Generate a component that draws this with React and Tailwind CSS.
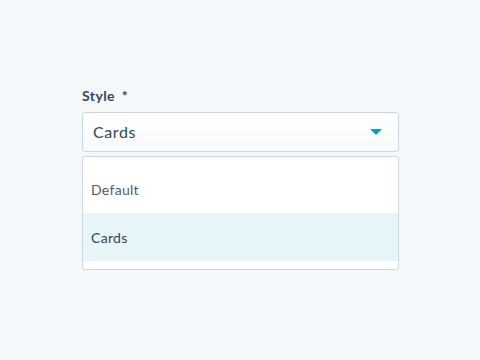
export default function App() {
  return (
    <div className="w-[480px] h-[360px] bg-[#f5f8fa] pt-[86px] px-[82px]" style={{ fontFamily: '"Lato", "Noto Sans", sans-serif' }}>
      <div className="text-[14px] font-bold text-[#33475b] leading-[20px] h-[20px] tracking-[0.4px]">
        Style <span className="ml-[3px]">*</span>
      </div>
      <div className="mt-[6px] w-[317px] h-[40px] border border-[#cbd6e2] rounded-[3px] bg-gradient-to-b from-white to-[#f7f9fa] flex items-center justify-between pl-[10px] pr-[16px]">
        <span className="text-[16px] text-[#33475b] tracking-[0.6px]">Cards</span>
        <svg width="12" height="6" viewBox="0 0 12 6">
          <path d="M0 0 L12 0 L6 6 Z" fill="#00a4bd" />
        </svg>
      </div>
      <div className="mt-[4px] w-[317px] border border-[#cbd6e2] rounded-[3px] bg-white py-[8px]">
        <div className="h-[48px] flex items-center pl-[8px] text-[14px] text-[#4f5a65] tracking-[0.3px]">Default</div>
        <div className="h-[48px] flex items-center pl-[8px] text-[14px] text-[#33475b] bg-[#e5f5f8] tracking-[0.3px]">Cards</div>
      </div>
    </div>
  );
}
